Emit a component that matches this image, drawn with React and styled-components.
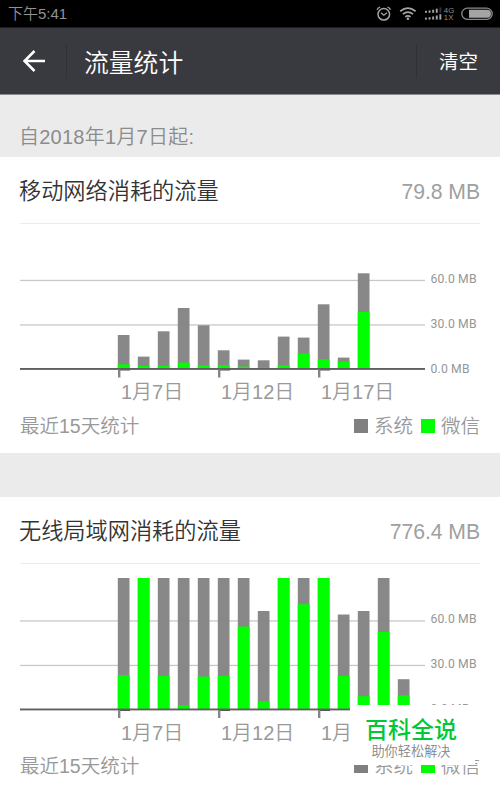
import React from "react";
import styled, { createGlobalStyle } from "styled-components";

const Global = createGlobalStyle`
  * { box-sizing: border-box; }
  body { margin: 0; background: #ebebeb; }
`;

const Screen = styled.div`
  position: relative;
  width: 500px;
  height: 790px;
  overflow: hidden;
  background: #ebebeb;
  font-family: "Liberation Sans", "Noto Sans CJK SC", sans-serif;
  font-weight: 350;
`;

const StatusBar = styled.div`
  display: flex;
  align-items: center;
  justify-content: space-between;
  height: 28px;
  padding: 0 0 0 8px;
  background: #000;
  color: #929292;
  border-bottom: 1px solid #1c1c1e;
`;

const Clock = styled.span`
  padding-top: 1px;
  font-size: 15px;
  line-height: 26px;
  font-weight: 350;
`;

const Header = styled.header`
  display: flex;
  align-items: center;
  height: 67px;
  padding-right: 22px;
  background: #393a3f;
  border-bottom: 1px solid #8c8c8f;
  color: #fff;
`;

const BackButton = styled.div`
  display: flex;
  align-items: center;
  width: 67px;
  height: 34px;
  padding-left: 22px;
  border-right: 1px solid #303135;
`;

const Title = styled.h1`
  flex: 1;
  margin: 0;
  padding: 5px 0 0 17px;
  font-size: 24.8px;
  font-weight: 350;
  line-height: 61px;
`;

const ClearButton = styled.div`
  height: 34px;
  padding: 2px 0 0 22px;
  border-left: 1px solid #303135;
  font-size: 19.5px;
  font-weight: 400;
  line-height: 32px;
`;

const Since = styled.div`
  height: 62px;
  padding: 27px 19px 0;
  font-size: 20px;
  line-height: 30px;
  letter-spacing: 0.25px;
  color: #8c8c8c;
  white-space: nowrap;
`;

const Panel = styled.section`
  height: ${(p) => p.$height}px;
  margin-bottom: ${(p) => p.$gap || 0}px;
  padding: 0 20px;
  background: #fff;
`;

const PanelHead = styled.div`
  display: flex;
  align-items: center;
  justify-content: space-between;
  height: 67px;
  padding-top: 3px;
  border-bottom: 1px solid #ebebeb;
`;

const PanelTitle = styled.h2`
  margin: 0 0 0 -1px;
  font-size: 22.2px;
  font-weight: 350;
  line-height: 62px;
  color: #333;
`;

const Total = styled.span`
  font-size: 21.2px;
  letter-spacing: -0.05px;
  color: #a0a0a0;
`;

const Plot = styled.svg`
  display: block;
  overflow: visible;
`;

const AxisText = styled.text`
  font-family: Roboto, sans-serif;
  font-size: 12.2px;
  font-weight: 400;
  fill: #969696;
`;

const DateText = styled.text`
  font-family: "Liberation Sans", "Noto Sans CJK SC", sans-serif;
  font-size: 20px;
  font-weight: 350;
  fill: #999;
`;

const PanelFoot = styled.div`
  display: flex;
  align-items: center;
  justify-content: space-between;
  height: 30px;
  font-size: 19.5px;
  line-height: 30px;
  color: #999;
`;

const Legend = styled.div`
  display: flex;
  align-items: center;
`;

const Swatch = styled.i`
  width: 14px;
  height: 14px;
  margin: -1px 6px 0 ${(p) => p.$before || 0}px;
  background: ${(p) => p.$color};
`;

const Badge = styled.div`
  position: absolute;
  left: 350px;
  top: 705px;
  width: 125px;
  height: 60px;
  padding-top: 9px;
  background: #fff;
  text-align: center;
  white-space: nowrap;
`;

const BadgeName = styled.div`
  padding-right: 3px;
  font-size: 23px;
  font-weight: 500;
  line-height: 32px;
  color: #00c837;
`;

const BadgeSlogan = styled.div`
  padding-right: 3px;
  font-size: 13.2px;
  font-weight: 350;
  line-height: 12px;
  color: #858585;
`;

const BASE = 145;
const MOBILE = [
  [34, 4.7], [12.4, 3], [37.7, 3], [61, 6.4], [43.7, 3.4], [18.7, 3.7], [9.4, 2.4],
  [8.7, 1.4], [32.4, 3.7], [31.4, 15.4], [64.7, 9.7], [11.4, 7.4], [95.7, 57],
];
const WIFI = [
  [131.5, 34.3], [131.5, 131.5], [131.5, 33.5], [131.5, 4], [131.5, 33], [131.5, 33.5],
  [131.5, 83], [98.5, 8], [131.5, 131.5], [131.5, 105.3], [131.5, 131.5], [95, 33.5],
  [98.5, 13.3], [131.5, 77.5], [30.3, 14],
];
const DATES = ["1月7日", "1月12日", "1月17日"];

function Chart({ data, shift = 0 }) {
  return (
    <Plot width="460" height="187" viewBox="0 0 460 187">
      <g transform={`translate(0 ${shift})`}>
        <rect x="0" y="55.8" width="405" height="1.3" fill="#c8c8c8" />
        <rect x="0" y="100.3" width="405" height="1.3" fill="#c8c8c8" />
        {data.map(([total, app], i) => (
          <g key={i}>
            <rect x={97.8 + i * 20} y={BASE - total} width="11.7" height={total} fill="#888" />
            <rect x={97.8 + i * 20} y={BASE - app} width="11.7" height={app} fill="#00ff00" />
          </g>
        ))}
        <rect x="0" y="144" width="405" height="1.9" fill="#606060" />
        {DATES.map((d, i) => (
          <g key={d}>
            <path d={`M${98 + i * 100} 146h12`} stroke="#555" strokeWidth="1" />
            <rect x={98 + i * 100} y="145.5" width="2.4" height="8" fill="#858585" />
            <DateText x={101 + i * 100} y="175">{d}</DateText>
          </g>
        ))}
      </g>
      <AxisText x="410.5" y="59" textLength="46">60.0 MB</AxisText>
      <AxisText x="410.5" y="104" textLength="46">30.0 MB</AxisText>
      <AxisText x="410.5" y="148.6" textLength="39">0.0 MB</AxisText>
    </Plot>
  );
}

function TrafficPanel({ title, total, data, height, gap, shift }) {
  return (
    <Panel $height={height} $gap={gap}>
      <PanelHead>
        <PanelTitle>{title}</PanelTitle>
        <Total>{total}</Total>
      </PanelHead>
      <Chart data={data} shift={shift} />
      <PanelFoot>
        <span>最近15天统计</span>
        <Legend>
          <Swatch $color="#808080" />系统
          <Swatch $color="#00ff00" $before={8} />微信
        </Legend>
      </PanelFoot>
    </Panel>
  );
}

function StatusIcons() {
  return (
    <svg width="125" height="27" viewBox="375 0 125 27" fill="none" stroke="#a4a4a4">
      <circle cx="383.8" cy="14.3" r="5.8" strokeWidth="1.5" />
      <path d="M381 12.8l2.8 2.4 3.2-2.4" strokeWidth="1.3" />
      <path d="M377.1 9.8q.6-2 3-2.7M390.5 9.8q-.6-2-3-2.7" strokeWidth="1.4" />
      <path d="M400.2 11.2q7.7-6.2 15.4 0M402.8 14.1q5.1-4 10.2 0M405.3 16.9q2.6-2 5.2 0" strokeWidth="1.8" />
      <circle cx="407.9" cy="18.8" r="1.3" fill="#a4a4a4" stroke="none" />
      <g fill="#a4a4a4" stroke="none">
        <rect x="425" y="10.8" width="1.9" height="2" />
        <rect x="428.6" y="10.4" width="1.9" height="2.4" />
        <rect x="432.2" y="9.7" width="1.9" height="3.1" />
        <rect x="435.8" y="8.7" width="1.9" height="4.1" />
        <rect x="439.4" y="7.4" width="1.9" height="5.4" fill="#333" />
        <rect x="425" y="17.6" width="1.9" height="2" />
        <rect x="428.6" y="17.2" width="1.9" height="2.4" />
        <rect x="432.2" y="16.5" width="1.9" height="3.1" />
        <rect x="435.8" y="15.5" width="1.9" height="4.1" />
        <rect x="439.4" y="14.2" width="1.9" height="5.4" />
      </g>
      <g fill="#8c8c8c" stroke="none" fontFamily="Liberation Sans, sans-serif" fontSize="7.8" fontWeight="400">
        <text x="443.8" y="12.9">4G</text>
        <text x="443.8" y="20">1X</text>
      </g>
      <rect x="461.8" y="8.2" width="30.4" height="11.2" rx="5.6" strokeWidth="1.3" stroke="#8b8b8b" />
      <path d="M469 9.8h18a4 4 0 0 1 0 8h-18z" fill="#a4a4a4" stroke="none" />
    </svg>
  );
}

export default function App() {
  return (
    <Screen>
      <Global />
      <StatusBar>
        <Clock>下午5:41</Clock>
        <StatusIcons />
      </StatusBar>
      <Header>
        <BackButton>
          <svg width="24" height="24" viewBox="0 0 24 24" fill="none" stroke="#fff" strokeWidth="2.5">
            <path d="M23 12H2.5M12.5 2L2.5 12l10 10" />
          </svg>
        </BackButton>
        <Title>流量统计</Title>
        <ClearButton>清空</ClearButton>
      </Header>
      <Since>自2018年1月7日起:</Since>
      <TrafficPanel title="移动网络消耗的流量" total="79.8 MB" data={MOBILE} height={296} gap={44.4} />
      <TrafficPanel title="无线局域网消耗的流量" total="776.4 MB" data={WIFI} height={293} shift={0.5} />
      <Badge>
        <BadgeName>百科全说</BadgeName>
        <BadgeSlogan>助你轻松解决</BadgeSlogan>
      </Badge>
    </Screen>
  );
}
